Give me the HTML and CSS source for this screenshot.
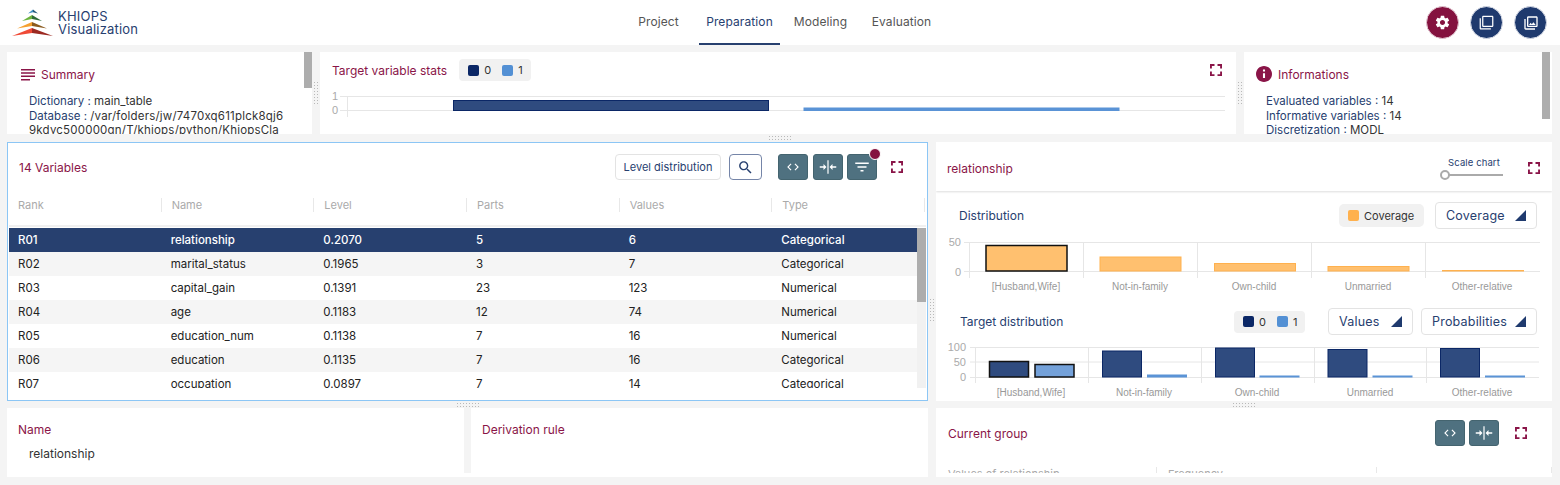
FILE: index.html
```html
<!DOCTYPE html>
<html lang="en">
<head>
    <meta charset="UTF-8">
    <meta name="viewport" content="width=device-width, initial-scale=1.0">
    <title>Khiops Visualization</title>
    <link rel="stylesheet" href="styles.css">
</head>
<body>
    <svg class="icon-defs" width="0" height="0">
        <symbol id="i-full" viewBox="0 0 24 24"><path d="M6.500 14H4v6h6v-2.500H6.500zM4 10h2.500V6.500H10V4H4zM17.500 17.500H14V20h6v-6h-2.500zM14 4v2.500h3.500V10H20V4z"/></symbol>
        <symbol id="i-code" viewBox="0 0 24 24"><path d="M9.400 16.600L4.800 12l4.600-4.600L8 6l-6 6 6 6 1.400-1.400zm5.200 0l4.600-4.600-4.600-4.600L16 6l6 6-6 6-1.400-1.400z"/></symbol>
        <symbol id="i-fit" viewBox="0 0 24 24"><path d="M11.200 3h1.600v18h-1.600zM1 11h5V8l4 4-4 4v-3H1zM23 11h-5V8l-4 4 4 4v-3h5z"/></symbol>
    </svg>

    <header class="topbar">
        <div class="brand">
            <svg class="logo" viewBox="12 9 42 28" width="42" height="28">
                <path d="M33 9.500l-5 4 5-1.200z" fill="#3f8fc4"/>
                <path d="M33 9.500l5 4-5-1.200z" fill="#22577a"/>
                <path d="M32 15l-10 6 10-2z" fill="#6cb33f"/>
                <path d="M32 15l10 6-10-2z" fill="#2f6b3a"/>
                <path d="M32 22l-15 6.500 15-2.500z" fill="#f5a030"/>
                <path d="M32 22l15 6.500-15-2.500z" fill="#8a5a1e"/>
                <path d="M32 28l-20 8 20-3z" fill="#ef4a36"/>
                <path d="M32 28l21 8-21-3z" fill="#9c2a22"/>
            </svg>
            <div class="brand-name">KHIOPS<br>Visualization</div>
        </div>
        <nav class="tabs">
            <a class="tab">Project</a>
            <a class="tab tab-active">Preparation</a>
            <a class="tab">Modeling</a>
            <a class="tab">Evaluation</a>
        </nav>
        <div class="top-actions">
            <button class="round-btn round-maroon"><svg viewBox="0 0 24 24" width="17" height="17"><path d="M19.140 12.940c.04-.3.06-.61.06-.94 0-.32-.02-.64-.07-.94l2.030-1.580c.18-.14.23-.41.12-.61l-1.920-3.320c-.12-.22-.37-.29-.59-.22l-2.390.96c-.5-.38-1.030-.7-1.620-.94l-.36-2.540c-.04-.24-.24-.41-.48-.41h-3.840c-.24 0-.43.17-.47.41l-.36 2.540c-.59.24-1.130.57-1.620.94l-2.390-.96c-.22-.08-.47 0-.59.22L2.740 8.870c-.12.21-.08.47.12.61l2.030 1.580c-.05.3-.09.63-.09.94s.02.64.07.94l-2.030 1.580c-.18.14-.23.41-.12.61l1.920 3.320c.12.22.37.29.59.22l2.390-.96c.5.38 1.030.7 1.620.94l.36 2.540c.05.24.24.41.48.41h3.840c.24 0 .44-.17.47-.41l.36-2.540c.59-.24 1.130-.56 1.620-.94l2.390.96c.22.08.47 0 .59-.22l1.920-3.320c.12-.22.07-.47-.12-.61l-2.010-1.580zM12 15.600c-1.980 0-3.600-1.620-3.600-3.600s1.620-3.600 3.600-3.600 3.600 1.620 3.600 3.600-1.620 3.600-3.600 3.600z"/></svg></button>
            <button class="round-btn"><svg viewBox="0 0 24 24" width="15" height="15"><path d="M3 5H1v16c0 1.100.9 2 2 2h16v-2H3V5zm18-4H7c-1.100 0-2 .9-2 2v14c0 1.100.9 2 2 2h14c1.100 0 2-.9 2-2V3c0-1.100-.9-2-2-2zm0 16H7V3h14v14z"/></svg></button>
            <button class="round-btn"><svg viewBox="0 0 24 24" width="16" height="16"><path d="M20 4v12H8V4h12m0-2H8c-1.100 0-2 .9-2 2v12c0 1.100.9 2 2 2h12c1.100 0 2-.9 2-2V4c0-1.100-.9-2-2-2zm-8.500 9.670l1.690 2.260 2.480-3.100L19 15H9zM2 6v14c0 1.100.9 2 2 2h14v-2H4V6H2z"/></svg></button>
        </div>
    </header>

    <main class="workspace">
        <section class="top-row">
            <div class="panel panel-summary">
                <span class="thumb thumb-summary"></span>
                <h2 class="panel-title">
                    <svg class="title-icon" viewBox="0 0 14 12" width="14" height="12"><path d="M0 0h14v1.500H0zM0 3.300h14v1.500H0zM0 6.600h14v1.500H0zM0 9.900h9v1.500H0z"/></svg>
                    Summary
                </h2>
                <div class="kv-list">
                    <p><span class="kv-key">Dictionary :</span> main_table</p>
                    <p><span class="kv-key">Database :</span> <span class="kv-path">/var/folders/jw/7470xq611plck8qj6<br>9kdyc500000gn/T/khiops/python/KhiopsCla</span></p>
                </div>
            </div>
            <div class="gutter-v"><span class="grip grip-v"></span></div>
            <div class="panel panel-target">
                <div class="target-head">
                    <h2 class="panel-title">Target variable stats</h2>
                    <div class="legend">
                        <span class="swatch swatch-dark"></span><span class="legend-text">0</span>
                        <span class="swatch swatch-light legend-next"></span><span class="legend-text">1</span>
                    </div>
                    <svg class="full-icon push-right"><use href="#i-full"/></svg>
                </div>
                <svg class="chart chart-target" viewBox="320 90 916 30" width="916" height="30">
                    <g class="grid-lines">
                        <path d="M340 96.500H1225M340 110.500H1225M347.500 96V117"/>
                    </g>
                    <text class="axis-num" x="338" y="100" text-anchor="end">1</text>
                    <text class="axis-num" x="338" y="114" text-anchor="end">0</text>
                    <rect class="bar-dark" x="453.500" y="100.500" width="315" height="10"/>
                    <rect class="bar-light" x="804" y="108" width="315" height="2.500"/>
                </svg>
            </div>
            <div class="gutter-v"><span class="grip grip-v"></span></div>
            <div class="panel panel-info">
                <span class="thumb thumb-info"></span>
                <h2 class="panel-title">
                    <svg class="title-icon info-icon" viewBox="2 2 20 20" width="16" height="16"><path d="M12 2C6.480 2 2 6.480 2 12s4.480 10 10 10 10-4.480 10-10S17.520 2 12 2zm1.300 15h-2.600v-6h2.600v6zm0-8h-2.600V6.500h2.600V9z"/></svg>
                    Informations
                </h2>
                <div class="kv-list">
                    <p><span class="kv-key">Evaluated variables :</span> 14</p>
                    <p><span class="kv-key">Informative variables :</span> 14</p>
                    <p><span class="kv-key">Discretization :</span> MODL</p>
                </div>
            </div>
        </section>

        <div class="gutter-h"><span class="grip grip-h"></span></div>

        <section class="bottom-row">
            <div class="col col-left">
                <div class="panel panel-vars">
                    <div class="vars-head">
                        <h2 class="panel-title">14 Variables</h2>
                        <div class="vars-tools">
                            <button class="btn-outline">Level distribution</button>
                            <button class="btn-search"><svg viewBox="0 0 24 24" width="17" height="17"><path d="M15.500 14h-.79l-.28-.27C15.410 12.590 16 11.110 16 9.500 16 5.910 13.090 3 9.500 3S3 5.910 3 9.500 5.910 16 9.500 16c1.610 0 3.090-.59 4.230-1.570l.27.28v.79l5 4.990L20.490 19l-4.990-5zm-6 0C7.010 14 5 11.990 5 9.500S7.010 5 9.500 5 14 7.010 14 9.500 11.990 14 9.500 14z"/></svg></button>
                            <button class="btn-teal btn-first"><svg><use href="#i-code"/></svg></button>
                            <button class="btn-teal btn-fit"><svg><use href="#i-fit"/></svg></button>
                            <button class="btn-teal btn-filter">
                                <svg viewBox="0 0 24 24"><path d="M10 18h4v-2h-4v2zM3 6v2h18V6H3zm3 7h12v-2H6v2z"/></svg>
                                <span class="badge"></span>
                            </button>
                            <svg class="full-icon vars-full"><use href="#i-full"/></svg>
                        </div>
                    </div>
                    <div class="var-head">
                        <div>Rank</div><div>Name</div><div>Level</div><div>Parts</div><div>Values</div><div>Type</div>
                    </div>
                    <div class="var-body">
                        <span class="track"><span class="track-thumb"></span></span>
                        <div class="var-row var-row-selected"><span>R01</span><span>relationship</span><span>0.2070</span><span>5</span><span>6</span><span>Categorical</span></div>
                        <div class="var-row"><span>R02</span><span>marital_status</span><span>0.1965</span><span>3</span><span>7</span><span>Categorical</span></div>
                        <div class="var-row"><span>R03</span><span>capital_gain</span><span>0.1391</span><span>23</span><span>123</span><span>Numerical</span></div>
                        <div class="var-row"><span>R04</span><span>age</span><span>0.1183</span><span>12</span><span>74</span><span>Numerical</span></div>
                        <div class="var-row"><span>R05</span><span>education_num</span><span>0.1138</span><span>7</span><span>16</span><span>Numerical</span></div>
                        <div class="var-row"><span>R06</span><span>education</span><span>0.1135</span><span>7</span><span>16</span><span>Categorical</span></div>
                        <div class="var-row"><span>R07</span><span>occupation</span><span>0.0897</span><span>7</span><span>14</span><span>Categorical</span></div>
                    </div>
                </div>
                <div class="gutter-h gutter-low"><span class="grip grip-h"></span></div>
                <div class="details">
                    <div class="detail-cell">
                        <h2 class="panel-title">Name</h2>
                        <p class="detail-value">relationship</p>
                    </div>
                    <div class="detail-gap"></div>
                    <div class="detail-cell">
                        <h2 class="panel-title">Derivation rule</h2>
                    </div>
                </div>
            </div>

            <div class="gutter-v"><span class="grip grip-v"></span></div>

            <div class="col col-right">
                <div class="panel panel-charts">
                    <div class="charts-head">
                        <h2 class="panel-title">relationship</h2>
                        <div class="scale">
                            <span class="scale-label">Scale chart</span>
                            <span class="scale-track"><span class="scale-knob"></span></span>
                        </div>
                        <svg class="full-icon charts-full"><use href="#i-full"/></svg>
                    </div>
                    <div class="chart-bar chart-bar-dist">
                        <h3 class="chart-title">Distribution</h3>
                        <div class="legend legend-cov">
                            <span class="swatch swatch-orange"></span><span class="legend-text">Coverage</span>
                        </div>
                        <div class="select select-cov">Coverage<span class="select-arrow"></span></div>
                    </div>
                    <svg class="chart chart-dist" viewBox="936 232 616 64" width="616" height="64">
                        <g class="grid-lines">
                            <path d="M964 242.500H1540M964 271.500H1540M969.500 242V278M1083.500 242V278M1197.500 242V278M1311.500 242V278M1425.500 242V278"/>
                        </g>
                        <text class="axis-num" x="961" y="246" text-anchor="end">50</text>
                        <text class="axis-num" x="961" y="276" text-anchor="end">0</text>
                        <rect class="bar-cov bar-sel" x="986" y="245.500" width="81" height="25.500"/>
                        <rect class="bar-cov" x="1100" y="257" width="81" height="14"/>
                        <rect class="bar-cov" x="1214.500" y="263.500" width="81" height="7.500"/>
                        <rect class="bar-cov" x="1328" y="266.500" width="81" height="4.500"/>
                        <rect class="bar-cov" x="1442.500" y="270.500" width="81" height="0.500"/>
                        <g class="axis-labels" text-anchor="middle">
                            <text x="1026" y="290">[Husband,Wife]</text>
                            <text x="1140" y="290">Not-in-family</text>
                            <text x="1254" y="290">Own-child</text>
                            <text x="1368" y="290">Unmarried</text>
                            <text x="1482" y="290">Other-relative</text>
                        </g>
                    </svg>
                    <div class="chart-bar chart-bar-target">
                        <h3 class="chart-title">Target distribution</h3>
                        <div class="legend legend-small">
                            <span class="swatch swatch-dark"></span><span class="legend-text">0</span>
                            <span class="swatch swatch-light legend-next"></span><span class="legend-text">1</span>
                        </div>
                        <div class="select select-values">Values<span class="select-arrow"></span></div>
                        <div class="select select-prob">Probabilities<span class="select-arrow"></span></div>
                    </div>
                    <svg class="chart chart-dist2" viewBox="936 342 616 56" width="616" height="56">
                        <g class="grid-lines">
                            <path d="M970 347.500H1539M970 362H1539M970 377.500H1539M975.500 347V383M1088.500 347V383M1201.500 347V383M1314.500 347V383M1426.500 347V383"/>
                        </g>
                        <text class="axis-num" x="966" y="351" text-anchor="end">100</text>
                        <text class="axis-num" x="966" y="366" text-anchor="end">50</text>
                        <text class="axis-num" x="966" y="381" text-anchor="end">0</text>
                        <rect class="bar-dark bar-sel" x="989.500" y="361.500" width="39" height="15.500"/>
                        <rect class="bar-light bar-sel" x="1035" y="364.500" width="39" height="12.500"/>
                        <rect class="bar-dark" x="1102.500" y="351" width="39" height="26"/>
                        <rect class="bar-light" x="1147.500" y="375" width="39" height="2"/>
                        <rect class="bar-dark" x="1215.500" y="348" width="39" height="29"/>
                        <rect class="bar-light" x="1260" y="376" width="39" height="1"/>
                        <rect class="bar-dark" x="1328" y="349.500" width="39" height="27.500"/>
                        <rect class="bar-light" x="1373" y="376" width="39" height="1"/>
                        <rect class="bar-dark" x="1440.500" y="348.500" width="39" height="28.500"/>
                        <rect class="bar-light" x="1485.500" y="376" width="39" height="1"/>
                        <g class="axis-labels" text-anchor="middle">
                            <text x="1031" y="396">[Husband,Wife]</text>
                            <text x="1144" y="396">Not-in-family</text>
                            <text x="1257" y="396">Own-child</text>
                            <text x="1370" y="396">Unmarried</text>
                            <text x="1482" y="396">Other-relative</text>
                        </g>
                    </svg>
                </div>
                <div class="gutter-h gutter-low"><span class="grip grip-h"></span></div>
                <div class="panel panel-group">
                    <div class="group-head">
                        <h2 class="panel-title">Current group</h2>
                        <div class="group-tools">
                            <button class="btn-teal"><svg><use href="#i-code"/></svg></button>
                            <button class="btn-teal btn-fit"><svg><use href="#i-fit"/></svg></button>
                            <svg class="full-icon group-full"><use href="#i-full"/></svg>
                        </div>
                    </div>
                    <div class="group-cols">
                        <div>Values of relationship</div><div>Frequency</div><div></div>
                    </div>
                </div>
            </div>
        </section>
    </main>
</body>
</html>
```

FILE: styles.css
```css
* {
    box-sizing: border-box;
}

body {
    margin: 0;
    height: 485px;
    overflow: hidden;
    background-color: #f4f4f4;
    font-family: Inter, "Open Sans", sans-serif;
    font-size: 12px;
    color: #222;
}

h2, h3, p {
    margin: 0;
    font-weight: 400;
}

button {
    font-family: inherit;
    padding: 0;
    cursor: pointer;
}

.icon-defs {
    display: block;
    height: 0;
}

/* top bar */
.topbar {
    display: grid;
    grid-template-columns: 1fr auto 1fr;
    height: 45px;
    background-color: #fff;
}

.brand {
    display: flex;
    align-items: flex-start;
    padding: 9px 0 0 12px;
}

.brand-name {
    margin: 1px 0 0 4px;
    font-size: 13px;
    letter-spacing: 0.2px;
    line-height: 13px;
    color: #27406f;
}

.tabs {
    display: flex;
}

.tab {
    width: 81px;
    height: 45px;
    padding-top: 14px;
    text-align: center;
    font-size: 12px;
    letter-spacing: 0.1px;
    color: #555;
}

.tab-active {
    color: #27406f;
    border-bottom: 2px solid #27406f;
}

.top-actions {
    display: flex;
    justify-content: flex-end;
    gap: 11px;
    padding: 6px 13px 0 0;
}

.round-btn {
    display: flex;
    align-items: center;
    justify-content: center;
    width: 33px;
    height: 33px;
    border: 1px solid #d7dbe6;
    border-radius: 50%;
    background-color: #1f3a6e;
    fill: #fff;
}

.round-maroon {
    background-color: #84123f;
    border-color: #e3c9d3;
}

/* layout */
.workspace {
    padding: 7px 8px 0 7px;
}

.top-row {
    display: flex;
    height: 82px;
}

.bottom-row {
    display: flex;
    height: 335px;
}

.col {
    display: flex;
    flex-direction: column;
}

.col-left {
    width: 921px;
}

.col-right {
    width: 616px;
}

.gutter-v {
    flex: 0 0 8px;
    display: flex;
    align-items: center;
    justify-content: center;
}

.gutter-h {
    flex: 0 0 8px;
    height: 8px;
    display: flex;
    align-items: center;
    justify-content: center;
}

.gutter-low {
    flex-basis: 7px;
    height: 7px;
}

.grip {
    display: block;
    background-image: radial-gradient(#b9b9b9 0.7px, transparent 1px);
    background-size: 3px 3px;
}

.grip-v {
    width: 6px;
    height: 24px;
}

.grip-h {
    width: 24px;
    height: 6px;
}

.panel {
    position: relative;
    overflow: hidden;
    background-color: #fff;
}

.panel-title {
    display: flex;
    align-items: center;
    font-size: 12px;
    color: #8a1548;
}

.title-icon {
    margin-right: 6px;
    fill: #8a1548;
}

.thumb {
    position: absolute;
    top: 0;
    width: 8px;
    background-color: #adadad;
}

/* top row panels */
.panel-summary {
    width: 305px;
    padding: 15px 0 0 14px;
}

.thumb-summary {
    right: 0;
    height: 36px;
}

.panel-info {
    width: 308px;
    padding: 14px 0 0 12px;
}

.thumb-info {
    right: 2px;
    height: 67px;
}

.kv-list {
    margin: 12px 0 0 8px;
    font-size: 11.500px;
    line-height: 14.500px;
    color: #333;
}

.panel-info .kv-list {
    margin: 12px 0 0 10px;
}

.kv-key {
    color: #27406f;
}

.kv-path {
    letter-spacing: 0.200px;
}

.panel-target {
    flex: 1;
}

.target-head {
    display: flex;
    align-items: center;
    height: 22px;
    margin-top: 7px;
    padding: 0 12px;
}

.legend {
    display: flex;
    align-items: center;
    border-radius: 4px;
    background-color: #f1f1f1;
}

.target-head .legend {
    width: 72px;
    height: 22px;
    margin-left: 12px;
    padding-left: 9px;
}

.swatch {
    width: 11px;
    height: 11px;
    border-radius: 2px;
}

.swatch-dark {
    background-color: #0b2766;
}

.swatch-light {
    background-color: #5390d4;
}

.swatch-orange {
    background-color: #ffb14e;
}

.legend-text {
    margin-left: 5px;
    font-size: 11px;
    color: #333;
}

.legend-next {
    margin-left: 11px;
}

.full-icon {
    width: 18px;
    height: 18px;
    fill: #8a1548;
}

.push-right {
    margin-left: auto;
    margin-right: -1px;
}

.chart {
    display: block;
}

.chart-target {
    margin-top: 9px;
}

.grid-lines path {
    fill: none;
    stroke: #e6e6e6;
    stroke-width: 1;
}

.axis-num {
    font-family: "Liberation Sans", sans-serif;
    font-size: 11px;
    fill: #aaa;
}

.axis-labels {
    font-family: "Liberation Sans", sans-serif;
    font-size: 10px;
    fill: #999;
}

.bar-dark {
    fill: #2f4b7f;
    stroke: #0b2766;
}

.bar-light {
    fill: #5a93d6;
    stroke: #5a93d6;
}

.bar-cov {
    fill: #ffc06f;
    stroke: #ffb14e;
}

.bar-sel {
    stroke: #111;
    stroke-width: 1.500;
}

.chart-dist2 .bar-light.bar-sel {
    fill: #74a1d9;
}

/* variables table */
.panel-vars {
    height: 259px;
    padding: 0 1px;
    border: 1px solid #8cc6f5;
}

.vars-head {
    display: flex;
    align-items: center;
    justify-content: space-between;
    height: 48px;
    padding: 0 20px 0 10px;
}

.vars-tools {
    display: flex;
    align-items: center;
}

.btn-outline {
    width: 106px;
    height: 26px;
    border: 1px solid #e3e3e3;
    border-radius: 4px;
    background-color: #fff;
    font-size: 11px;
    color: #27406f;
}

.btn-search {
    display: flex;
    align-items: center;
    justify-content: center;
    width: 33px;
    height: 26px;
    margin-left: 8px;
    border: 1px solid #7585a8;
    border-radius: 4px;
    background-color: #fff;
    fill: #27406f;
}

.btn-teal {
    position: relative;
    display: flex;
    align-items: center;
    justify-content: center;
    width: 30px;
    height: 26px;
    margin-left: 4.500px;
    border: 1px solid #44646f;
    border-radius: 3px;
    background-color: #4f7180;
    fill: #fff;
}

.btn-teal svg {
    width: 14px;
    height: 14px;
}

.btn-first {
    margin-left: 16px;
}

.btn-teal.btn-fit svg {
    width: 18px;
    height: 18px;
}

.btn-filter svg {
    width: 18px;
    height: 18px;
}

.badge {
    position: absolute;
    top: -7px;
    right: -5px;
    width: 12px;
    height: 12px;
    border: 1px solid #fff;
    border-radius: 50%;
    background-color: #84123f;
}

.vars-full {
    margin-left: 11px;
}

.var-head {
    display: grid;
    grid-template-columns: repeat(6, 152.670px);
    align-items: center;
    height: 36px;
    padding-bottom: 6px;
    font-size: 11px;
    color: #aaa;
    border-bottom: 2px solid #f0f0f0;
}

.var-head div {
    height: 14px;
    line-height: 14px;
    padding-left: 10px;
    border-right: 1px solid #e8e8e8;
}

.var-head div:first-child {
    padding-left: 9px;
}

.var-body {
    position: relative;
    height: 160px;
    overflow: hidden;
    margin-top: 1px;
    padding-right: 8px;
}

.track {
    position: absolute;
    top: 0;
    right: 0;
    bottom: 0;
    width: 9px;
    background-color: #f1f1f1;
}

.track-thumb {
    display: block;
    width: 100%;
    height: 74px;
    background-color: #adadad;
}

.var-row {
    display: grid;
    grid-template-columns: repeat(5, 152.670px) 1fr;
    align-items: center;
    height: 24px;
    font-size: 11.500px;
    color: #222;
}

.var-row span {
    padding-left: 9px;
}

.var-row:nth-child(odd) {
    background-color: #f5f5f5;
}

.var-row-selected {
    background-color: #27406f !important;
    color: #fff;
    font-weight: 500;
}

/* details under the table */
.details {
    display: flex;
    height: 69px;
    padding-bottom: 4px;
    background-color: #fff;
}

.detail-cell {
    flex: 1;
    padding: 14px 11px 0;
    background-color: #fff;
}

.detail-gap {
    flex: 0 0 7px;
    background-color: #f4f4f4;
}

.detail-value {
    margin: 9px 0 0 11px;
    color: #333;
}

/* right side charts */
.panel-charts {
    height: 259px;
}

.charts-head {
    display: flex;
    align-items: center;
    height: 49px;
    padding: 3px 9px 0 11px;
    box-shadow: 0 1px 2px #ddd;
}

.scale {
    position: relative;
    width: 58px;
    height: 28px;
    margin-left: auto;
    margin-right: 22px;
}

.scale-label {
    display: block;
    margin-top: 3px;
    text-align: center;
    font-size: 9.500px;
    letter-spacing: 0.1px;
    color: #27406f;
}

.scale-track {
    position: absolute;
    left: 0;
    right: 0;
    top: 20px;
    height: 2px;
    background-color: #aaa;
}

.scale-knob {
    position: absolute;
    left: -5px;
    top: -4px;
    width: 10px;
    height: 10px;
    border: 2px solid #aaa;
    border-radius: 50%;
    background-color: #fff;
}

.chart-bar {
    display: flex;
    align-items: center;
}

.chart-bar-dist {
    height: 27px;
    margin-top: 11px;
    padding: 0 15px 0 23px;
}

.chart-bar-target {
    height: 27px;
    margin-top: 12px;
    padding: 0 15px 0 24px;
}

.chart-title {
    font-size: 12px;
    color: #27406f;
}

.legend-cov {
    width: 85px;
    height: 23px;
    margin-left: auto;
    padding-left: 9px;
    border-radius: 5px;
}

.legend-small {
    width: 71px;
    height: 22px;
    margin-left: auto;
    padding-left: 9px;
}

.select {
    display: flex;
    align-items: center;
    justify-content: space-between;
    height: 27px;
    padding: 0 10px;
    border: 1px solid #e3e3e3;
    border-radius: 4px;
    background-color: #fff;
    font-size: 12.500px;
    letter-spacing: 0.2px;
    color: #27406f;
}

.select-arrow {
    width: 11px;
    height: 11px;
    background-color: #1f3a6e;
    clip-path: polygon(100% 0, 100% 100%, 0 100%);
}

.select-cov {
    width: 102px;
    margin-left: 11px;
}

.select-values {
    width: 85px;
    margin-left: 23px;
}

.select-prob {
    width: 116px;
    margin-left: 8px;
}

.chart-dist {
    margin-top: 3px;
}

.chart-dist2 {
    margin-top: 7px;
}

.panel-group {
    height: 69px;
}

.group-head {
    display: flex;
    align-items: center;
    justify-content: space-between;
    height: 50px;
    padding: 0 22px 0 12px;
}

.group-tools {
    display: flex;
    align-items: center;
}

.group-full {
    margin-left: 13px;
}

.group-cols {
    display: grid;
    grid-template-columns: 220px 220px 1fr;
    height: 15px;
    overflow: hidden;
    padding-top: 9px;
    margin-left: 1px;
    font-size: 11px;
    color: #aaa;
}

.group-cols div {
    padding-left: 11px;
    border-right: 1px solid #e8e8e8;
    height: 14px;
}
```
